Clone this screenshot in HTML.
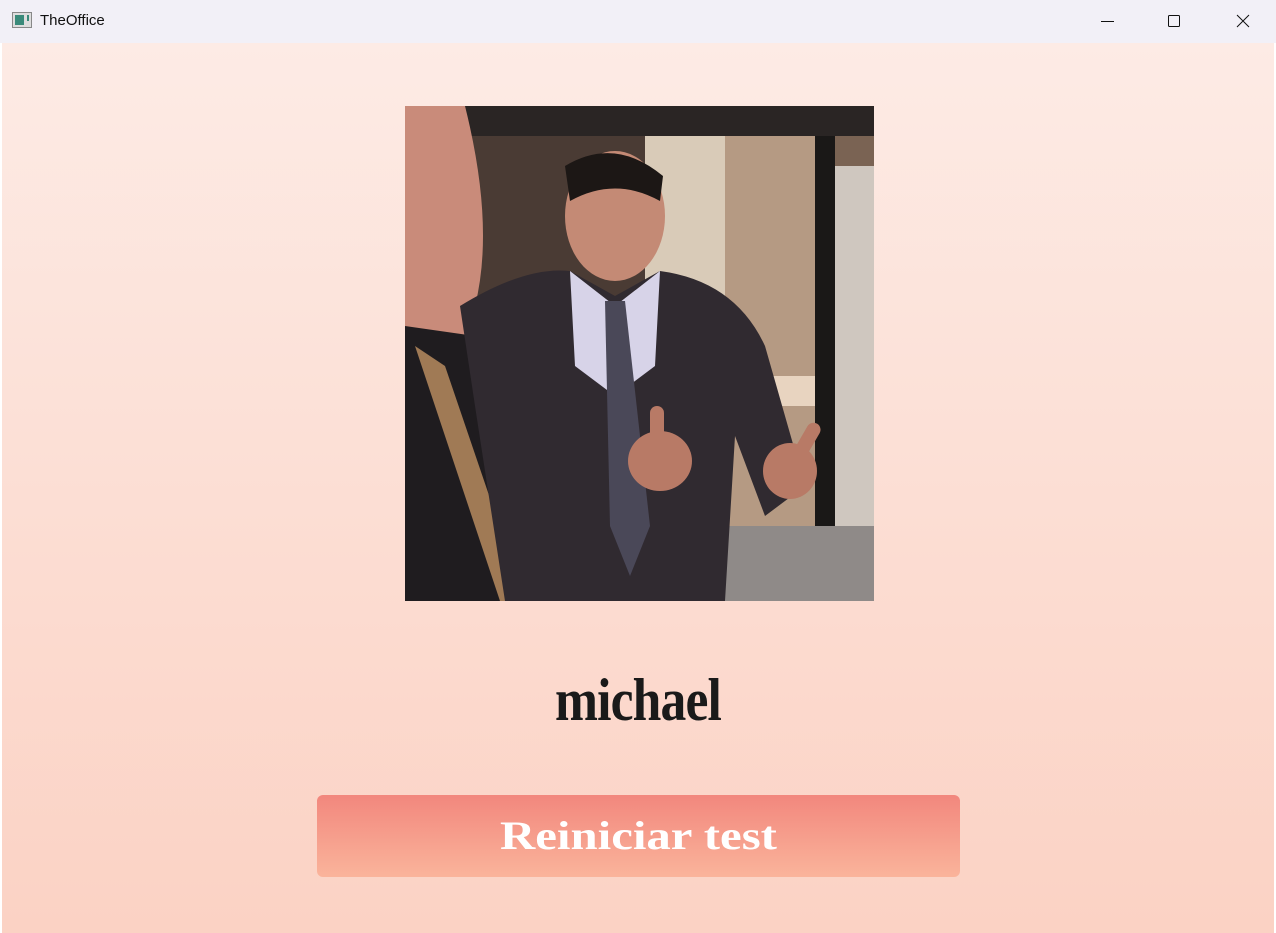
<!DOCTYPE html>
<html><head><style>
*{margin:0;padding:0;box-sizing:border-box}
body{width:1276px;height:933px;overflow:hidden;font-family:"Liberation Sans",sans-serif;background:#fff}
.tb{position:absolute;left:0;top:0;width:1276px;height:43px;background:#f2f0f7}
.tb .t{position:absolute;left:40px;top:12px;font-size:15px;color:#111}
.main{position:absolute;left:2px;top:43px;width:1272px;height:890px;background:linear-gradient(#fdebe5,#fbd2c4)}
.photo{position:absolute;left:405px;top:106px;width:469px;height:495px;overflow:hidden;background:#8a7566}
.name{position:absolute;left:0;width:1276px;top:666px;text-align:center;font-family:"Liberation Serif",serif;font-weight:bold;font-size:60px;color:#1a1a1a;transform:scaleX(0.86);letter-spacing:-1px}
.btn{position:absolute;left:317px;top:795px;width:643px;height:82px;border-radius:6px;background:linear-gradient(#f2877d,#fab49b)}
.btn span{position:absolute;left:0;width:643px;top:0;line-height:82px;color:#fff;font-family:"Liberation Serif",serif;font-weight:bold;font-size:40px;text-align:center;transform:scaleX(1.22)}
</style></head><body>
<div class="tb">
<svg style="position:absolute;left:12px;top:12px" width="20" height="16"><rect x="0.5" y="0.5" width="19" height="15" fill="#ddd" stroke="#888"/><rect x="3" y="3" width="9" height="10" fill="#3a8a7a"/><rect x="15" y="3" width="2" height="6" fill="#3a8a7a"/></svg>
<span class="t">TheOffice</span>
<svg style="position:absolute;left:1100px;top:14px" width="150" height="16" fill="none" stroke="#111" stroke-width="1"><line x1="1" y1="7.5" x2="14" y2="7.5"/><rect x="68.5" y="1.5" width="11" height="11" rx="1"/><path d="M137 1l12 12M149 1l-12 12"/></svg>
</div>
<div class="main"></div>
<div class="photo">
<svg width="469" height="495">
<rect width="469" height="495" fill="#7a6353"/>
<rect x="60" y="0" width="180" height="300" fill="#4a3b34"/>
<rect x="240" y="0" width="90" height="495" fill="#d9cbb8"/>
<rect x="320" y="0" width="100" height="495" fill="#b59a83"/>
<rect x="410" y="0" width="20" height="495" fill="#1a1817"/>
<rect x="430" y="60" width="39" height="400" fill="#cfc7bf"/>
<rect x="0" y="0" width="469" height="30" fill="#2a2524"/>
<rect x="330" y="270" width="80" height="30" fill="#e8d4c0"/>
<rect x="0" y="420" width="469" height="75" fill="#8f8a88"/>
<path d="M0 0 H60 Q90 120 70 200 L60 260 L0 280Z" fill="#c98b7a"/>
<path d="M0 220 L70 230 L110 495 H0Z" fill="#1f1c1f"/>
<path d="M10 240 L40 260 L120 495 H95Z" fill="#a07a55"/>
<ellipse cx="210" cy="110" rx="50" ry="65" fill="#c48a75"/>
<path d="M160 60 Q210 30 258 70 L255 95 Q210 70 165 95Z" fill="#1c1715"/>
<path d="M55 200 Q120 160 165 165 L210 190 L255 165 Q330 175 360 240 L400 380 L360 410 L330 330 L320 495 H100 L70 300Z" fill="#302a30"/>
<path d="M165 165 L210 200 L255 165 L250 260 L210 290 L170 260Z" fill="#d7d3e8"/>
<path d="M200 195 L220 195 L245 420 L225 470 L205 420Z" fill="#4a4858"/>
<ellipse cx="255" cy="355" rx="32" ry="30" fill="#b87a66"/>
<rect x="245" y="300" width="14" height="40" rx="7" fill="#b87a66"/>
<ellipse cx="385" cy="365" rx="27" ry="28" fill="#b87a66"/>
<rect x="395" y="315" width="14" height="40" rx="7" transform="rotate(30 402 335)" fill="#b87a66"/>
</svg>
</div>
<div class="name">michael</div>
<div class="btn"><span>Reiniciar test</span></div>
</body></html>
